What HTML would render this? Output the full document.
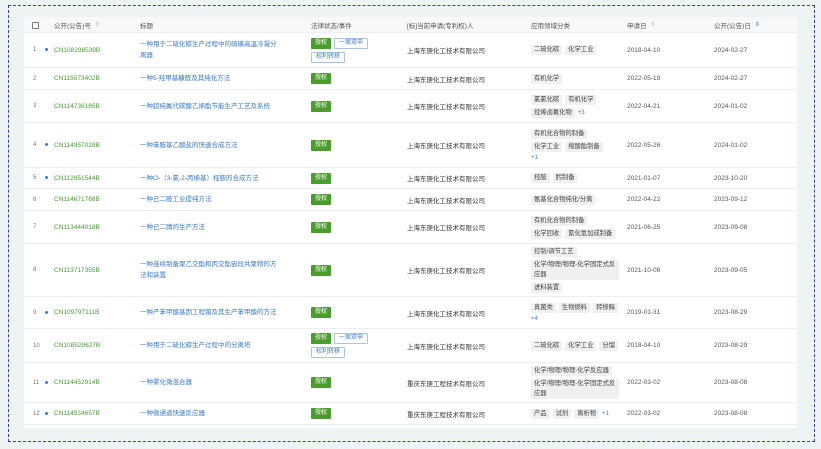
<!DOCTYPE html>
<html><head><meta charset="utf-8">
<style>
*{box-sizing:border-box;margin:0;padding:0}
body{width:821px;height:449px;background:#eef4f4;font-family:"Liberation Sans","Noto Sans CJK SC",sans-serif;font-size:6.5px;color:#333;position:relative;overflow:hidden}
.frame{position:absolute;left:8px;top:5px;width:807px;height:437px;border:1px dashed #3a3fa0}
.tbl{position:absolute;left:24px;top:17px;width:773px;height:411px;background:#fff}
.row{position:absolute;left:0;width:773px;border-bottom:1px solid #eceff2}
.hdr{background:#f7f8fa;color:#555}
.c{position:absolute;top:0;height:100%;display:flex;align-items:center;flex-wrap:wrap;align-content:center}
.n{left:9px;color:#777;font-size:6px}
.dot{position:absolute;left:21px;top:50%;width:3px;height:3px;margin-top:-2px;border-radius:50%;background:#3b7dd8}
.cn{left:30px;color:#4e9a3a}
.t{left:116px;width:140px;color:#3b79c6;line-height:11px}
.l{left:287px;width:70px;gap:3px}
.a{left:383px;color:#333}
.f{left:507px;width:88px;gap:3px;color:#555}
.d{left:603px;color:#555}
.p{left:690px;color:#555}
.g{background:#4a9d2c;color:#fff;padding:0 4px;height:11px;line-height:11px;font-size:6px;border-radius:1px}
.o{border:1px solid #a8c3e6;color:#3b79c6;padding:0 4px;height:11px;line-height:9px;font-size:6px;border-radius:1px}
.tag{background:#eef0f2;color:#444;padding:0 3px;min-height:10px;line-height:10px;font-size:6.3px;border-radius:1px}
.more{color:#3b79c6;font-size:6px}
.cb{position:absolute;left:8px;top:5px;width:7px;height:7px;border:1px solid #777;border-radius:1px}
.s{color:#bbb;font-size:6px;margin-left:4px}
</style></head><body>
<div class="frame"></div>
<div class="tbl">
<div class="row hdr" style="top:0;height:16px">
<div class="cb"></div>
<div class="c" style="left:30px">公开(公告)号<span class="s">⇕</span></div>
<div class="c" style="left:116px">标题</div>
<div class="c" style="left:287px">法律状态/事件</div>
<div class="c" style="left:383px">[标]当前申请(专利权)人</div>
<div class="c" style="left:507px">应用领域分类</div>
<div class="c" style="left:603px">申请日<span class="s">⇕</span></div>
<div class="c" style="left:690px">公开(公告)日<span class="s" style="color:#3b7dd8">⇕</span></div>
</div>

<div class="row" style="top:16px;height:35px"><div class="c n">1</div><span class="dot"></span><div class="c cn">CN108298539B</div><div class="c t">一种用于二硫化碳生产过程中的硫磺高温冷凝分离器</div><div class="c l"><span class="g">授权</span><span class="o">一案双申</span><span class="o">权利转移</span></div><div class="c a">上海东庚化工技术有限公司</div><div class="c f"><span class="tag">二硫化碳</span><span class="tag">化学工业</span></div><div class="c d">2018-04-10</div><div class="c p">2024-02-27</div></div>

<div class="row" style="top:51px;height:22px"><div class="c n">2</div><div class="c cn">CN115073402B</div><div class="c t">一种5-羟甲基糠醛及其纯化方法</div><div class="c l"><span class="g">授权</span></div><div class="c a">上海东庚化工技术有限公司</div><div class="c f"><span class="tag">有机化学</span></div><div class="c d">2022-05-19</div><div class="c p">2024-02-27</div></div>

<div class="row" style="top:73px;height:33px"><div class="c n">3</div><div class="c cn">CN114736185B</div><div class="c t">一种超纯氟代碳酸乙烯酯节能生产工艺及系统</div><div class="c l"><span class="g">授权</span></div><div class="c a">上海东庚化工技术有限公司</div><div class="c f"><span class="tag">氯氯化碳</span><span class="tag">有机化学</span><span class="tag">烃烯卤氟化物</span><span class="more">+3</span></div><div class="c d">2022-04-21</div><div class="c p">2024-01-02</div></div>

<div class="row" style="top:106px;height:45px"><div class="c n">4</div><span class="dot"></span><div class="c cn">CN114957028B</div><div class="c t">一种苯胺基乙酸盐的快速合成方法</div><div class="c l"><span class="g">授权</span></div><div class="c a">上海东庚化工技术有限公司</div><div class="c f" style="width:76px"><span class="tag">有机化合物的制备</span><span class="tag">化学工业</span><span class="tag">羧酸酯制备</span><span class="more">+1</span></div><div class="c d">2022-05-26</div><div class="c p">2024-01-02</div></div>

<div class="row" style="top:151px;height:21px"><div class="c n">5</div><span class="dot"></span><div class="c cn">CN112851544B</div><div class="c t" style="width:160px">一种O-（3-氯-2-丙烯基）羟胺的合成方法</div><div class="c l"><span class="g">授权</span></div><div class="c a">上海东庚化工技术有限公司</div><div class="c f"><span class="tag">羟胺</span><span class="tag">肟制备</span></div><div class="c d">2021-01-07</div><div class="c p">2023-10-20</div></div>

<div class="row" style="top:172px;height:22px"><div class="c n">6</div><div class="c cn">CN114671768B</div><div class="c t">一种己二胺工业提纯方法</div><div class="c l"><span class="g">授权</span></div><div class="c a">上海东庚化工技术有限公司</div><div class="c f"><span class="tag">氨基化合物纯化/分离</span></div><div class="c d">2022-04-22</div><div class="c p">2023-09-12</div></div>

<div class="row" style="top:194px;height:33px"><div class="c n">7</div><div class="c cn">CN113444018B</div><div class="c t">一种己二腈的生产方法</div><div class="c l"><span class="g">授权</span></div><div class="c a">上海东庚化工技术有限公司</div><div class="c f"><span class="tag">有机化合物的制备</span><span class="tag">化学回收</span><span class="tag">氰化氢加成制备</span></div><div class="c d">2021-06-25</div><div class="c p">2023-09-08</div></div>

<div class="row" style="top:227px;height:53px"><div class="c n">8</div><div class="c cn">CN113717355B</div><div class="c t">一种连续制备聚乙交酯和丙交酯嵌段共聚物的方法和装置</div><div class="c l"><span class="g">授权</span></div><div class="c a">上海东庚化工技术有限公司</div><div class="c f"><span class="tag">控制/调节工艺</span><span class="tag">化学/物理/物理-化学固定式反应器</span><span class="tag">进料装置</span></div><div class="c d">2021-10-08</div><div class="c p">2023-09-05</div></div>

<div class="row" style="top:280px;height:32px"><div class="c n">9</div><span class="dot"></span><div class="c cn">CN109797111B</div><div class="c t">一种产苯甲酸基因工程菌及其生产苯甲酸的方法</div><div class="c l"><span class="g">授权</span></div><div class="c a">上海东庚化工技术有限公司</div><div class="c f" style="width:92px"><span class="tag">真菌类</span><span class="tag">生物燃料</span><span class="tag">转移酶</span><span class="more">+4</span></div><div class="c d">2019-01-31</div><div class="c p">2023-08-29</div></div>

<div class="row" style="top:312px;height:34px"><div class="c n">10</div><div class="c cn">CN108529627B</div><div class="c t" style="width:160px">一种用于二硫化碳生产过程中的分离塔</div><div class="c l"><span class="g">授权</span><span class="o">一案双申</span><span class="o">权利转移</span></div><div class="c a">上海东庚化工技术有限公司</div><div class="c f"><span class="tag">二硫化碳</span><span class="tag">化学工业</span><span class="tag">分馏</span></div><div class="c d">2018-04-10</div><div class="c p">2023-08-29</div></div>

<div class="row" style="top:346px;height:40px"><div class="c n">11</div><span class="dot"></span><div class="c cn">CN114452914B</div><div class="c t">一种雾化微混合器</div><div class="c l"><span class="g">授权</span></div><div class="c a">重庆东庚工程技术有限公司</div><div class="c f"><span class="tag">化学/物理/物理-化学反应器</span><span class="tag">化学/物理/物理-化学固定式反应器</span></div><div class="c d">2022-03-02</div><div class="c p">2023-08-08</div></div>

<div class="row" style="top:386px;height:22px"><div class="c n">12</div><span class="dot"></span><div class="c cn">CN114534657B</div><div class="c t">一种微通道快速反应器</div><div class="c l"><span class="g">授权</span></div><div class="c a">重庆东庚工程技术有限公司</div><div class="c f"><span class="tag">产品</span><span class="tag">试剂</span><span class="tag">离析物</span><span class="more">+1</span></div><div class="c d">2022-03-02</div><div class="c p">2023-08-08</div></div>
</div>
</body></html>
